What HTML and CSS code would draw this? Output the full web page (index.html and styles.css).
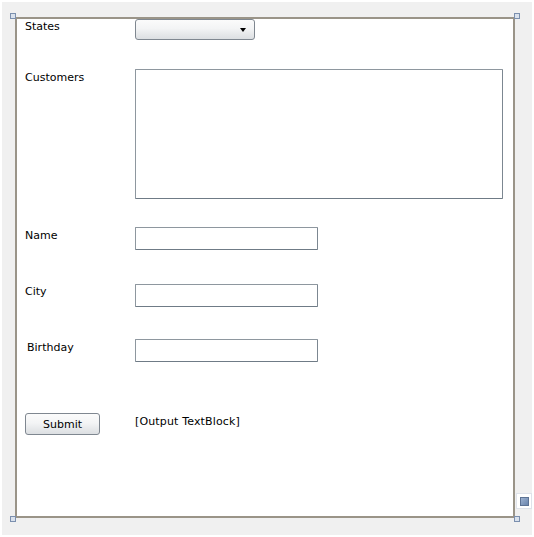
FILE: index.html
```html
<!DOCTYPE html>
<html>
<head>
<meta charset="utf-8">
<link rel="stylesheet" href="styles.css">
</head>
<body>
<div class="canvas">
  <div class="frame">
    <span class="handle h-tl"></span>
    <span class="handle h-tr"></span>
    <span class="handle h-bl"></span>
    <span class="handle h-br"></span>
    <span class="grip"><span class="grip-in"></span></span>
    <div class="form">
      <div class="row r1">
        <div class="label">States</div>
        <div class="combo"><span class="arrow"></span></div>
      </div>
      <div class="row r2">
        <div class="label">Customers</div>
        <div class="listbox"></div>
      </div>
      <div class="row r3">
        <div class="label">Name</div>
        <div class="textbox"></div>
      </div>
      <div class="row r4">
        <div class="label">City</div>
        <div class="textbox"></div>
      </div>
      <div class="row r5">
        <div class="label indent">Birthday</div>
        <div class="textbox"></div>
      </div>
      <div class="row r6">
        <div class="btncell"><div class="button">Submit</div></div>
        <div class="output">[Output TextBlock]</div>
      </div>
    </div>
  </div>
</div>
</body>
</html>
```

FILE: styles.css
```css
html, body {
  margin: 0;
  padding: 0;
  background: #ffffff;
}
body {
  font-family: "DejaVu Sans", Verdana, sans-serif;
  font-size: 11px;
  color: #000;
}
.canvas {
  margin: 2px 0 0 2px;
  width: 530px;
  height: 533px;
  background: #f0f0f0;
  padding: 15px 0 0 13px;
  box-sizing: border-box;
}
.frame {
  position: relative;
  width: 500px;
  height: 501px;
  box-sizing: border-box;
  border: 2px solid #9a9488;
  background: #ffffff;
}
.handle {
  position: absolute;
  width: 6px;
  height: 6px;
  box-sizing: border-box;
  border: 1px solid #7b8fae;
  background: #d9e1ec;
}
.h-tl { left: -7px; top: -6px; }
.h-tr { left: 497px; top: -6px; }
.h-bl { left: -7px; top: 497px; }
.h-br { left: 497px; top: 497px; }
.grip {
  position: absolute;
  left: 499px;
  top: 474px;
  width: 16px;
  height: 16px;
  box-sizing: border-box;
  border: 1px solid #dfe3ea;
  background: #ffffff;
  display: flex;
  align-items: center;
  justify-content: center;
}
.grip-in {
  width: 9px;
  height: 9px;
  box-sizing: border-box;
  border: 1px solid #5d7395;
  background: linear-gradient(135deg, #9db2d1, #6a85ad);
}
.form {
  padding-left: 8px;
}
.row {
  display: grid;
  grid-template-columns: 110px auto;
  align-items: start;
}
.r1 { height: 50px; }
.r2 { height: 158px; }
.r3 { height: 57px; }
.r4 { height: 55px; }
.r5 { height: 74px; }
.r6 { height: 60px; }
.label {
  line-height: 13px;
  margin-top: 1px;
}
.r3 .label, .r5 .label, .r2 .label { margin-top: 2px; }
.indent { padding-left: 2px; }
.combo {
  position: relative;
  width: 120px;
  height: 21px;
  box-sizing: border-box;
  border: 1px solid #7f8790;
  border-radius: 3px;
  background: linear-gradient(#fbfbfb 0%, #f3f4f5 45%, #e6e8ea 75%, #dcdfe2 100%);
}
.arrow {
  position: absolute;
  left: 104px;
  top: 8px;
  width: 0;
  height: 0;
  border-left: 3px solid transparent;
  border-right: 3px solid transparent;
  border-top: 4px solid #000;
}
.listbox {
  width: 368px;
  height: 130px;
  box-sizing: border-box;
  border: 1px solid #8e979f;
  border-bottom-color: #6f7b86;
  border-right-color: #7c8791;
  border-radius: 1px;
  background: #fff;
}
.textbox {
  width: 183px;
  height: 23px;
  box-sizing: border-box;
  border: 1px solid #8e979f;
  border-bottom-color: #6f7b86;
  border-right-color: #7c8791;
  border-radius: 1px;
  background: #fff;
}
.button {
  width: 75px;
  height: 22px;
  box-sizing: border-box;
  border: 1px solid #7f8790;
  border-radius: 3px;
  background: linear-gradient(#fbfbfb 0%, #f3f4f5 45%, #e6e8ea 75%, #dcdfe2 100%);
  text-align: center;
  line-height: 22px;
}
.output {
  line-height: 13px;
  margin-top: 2px;
  letter-spacing: 0.15px;
}
```
